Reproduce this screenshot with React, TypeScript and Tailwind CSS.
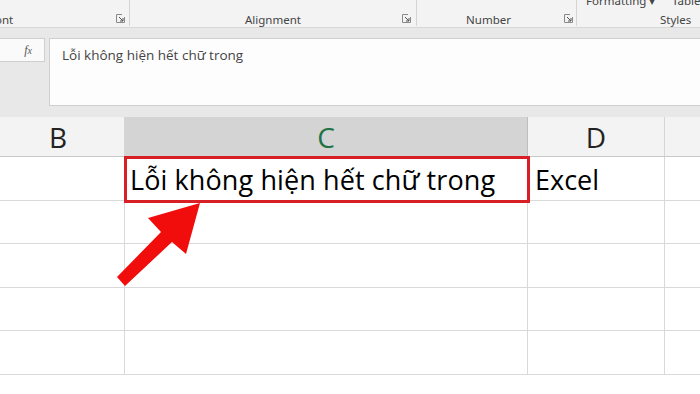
import React from "react";

const Launcher = () => (
  <svg width="9" height="9" viewBox="0 0 9 9" className="shrink-0">
    <path d="M0.5 0.5 H6 M0.5 0.5 V8.5 H8.5 V3" stroke="#8a8a8a" strokeWidth="1" fill="none" />
    <path d="M3 3 L7 7 M7 4 V7 H4" stroke="#555" strokeWidth="1" fill="none" />
  </svg>
);

const ui = { fontFamily: '"Noto Sans", "Open Sans", sans-serif' };
const cal = { fontFamily: '"Open Sans", "Noto Sans", sans-serif' };

export default function App() {
  const rows = [0, 1, 2, 3, 4];
  return (
    <div className="relative w-[700px] h-[394px] overflow-hidden bg-white" style={ui}>
      {/* Ribbon */}
      <div className="flex h-[28px] bg-[#f3f3f3] border-b border-[#d8d8d8] text-[11.5px] text-[#444]">
        <div className="w-[129px] flex items-end pb-0 relative">
          <span className="ml-[-11px] leading-[14px]">Font</span>
          <div className="absolute right-[4px] bottom-[4px]"><Launcher /></div>
        </div>
        <div className="w-px h-[26px] bg-[#d4d4d4]" />
        <div className="w-[286px] flex items-end justify-center pb-0 relative">
          <span className="leading-[14px]">Alignment</span>
          <div className="absolute right-[5px] bottom-[4px]"><Launcher /></div>
        </div>
        <div className="w-px h-[26px] bg-[#d4d4d4]" />
        <div className="w-[159px] flex items-end justify-center pb-0 relative">
          <span className="leading-[14px] mr-[16px]">Number</span>
          <div className="absolute right-[3px] bottom-[4px]"><Launcher /></div>
        </div>
        <div className="w-px h-[26px] bg-[#d4d4d4]" />
        <div className="flex-1 relative">
          <span className="absolute left-[9px] top-[-6px] leading-[14px] whitespace-nowrap">Formatting ▾</span>
          <span className="absolute left-[95px] top-[-6px] leading-[14px]">Table</span>
          <span className="absolute left-[83px] bottom-0 leading-[14px]">Styles</span>
        </div>
      </div>
      {/* Formula area */}
      <div className="h-[89px] bg-[#e8e8e8] flex pt-[10px] pb-[11px]">
        <div className="w-[45px] h-[24px] bg-[#fafafa] border border-[#cfcfcf] border-l-0 flex items-center justify-end pr-[12px]">
          <span className="italic text-[12px] text-[#555]" style={{ fontFamily: '"Liberation Serif", serif' }}>f<span className="text-[10px]">x</span></span>
        </div>
        <div className="ml-[4px] flex-1 bg-[#fdfdfd] border border-[#cfcfcf] border-r-0 pl-[12px] pt-[3px]">
          <span className="text-[13.5px] text-[#444]" style={{ fontFamily: '"Open Sans", sans-serif' }}>Lỗi không hiện hết chữ trong</span>
        </div>
      </div>
      {/* Column headers */}
      <div className="flex h-[40px] bg-[#f3f3f3] border-b border-[#c8c8c8] text-[28px] text-[#222]" style={cal}>
        <div className="w-[125px] border-r border-[#d6d6d6] flex items-center justify-center pr-[8px]">B</div>
        <div className="w-[403px] bg-[#d4d4d4] border-r border-[#bdbdbd] flex items-center justify-center text-[#217346]">C</div>
        <div className="w-[137px] border-r border-[#d6d6d6] flex items-center justify-center">D</div>
        <div className="flex-1" />
      </div>
      {/* Grid */}
      {rows.map((r) => (
        <div key={r} className="flex h-[43.5px] border-b border-[#d9d9d9] text-[27px] text-black" style={cal}>
          <div className="w-[125px] border-r border-[#d9d9d9]" />
          <div className="w-[403px] border-r border-[#d9d9d9] relative">
            {r === 0 && (
              <span className="absolute left-[5px] top-[3px] whitespace-nowrap tracking-[0.1px]">Lỗi không hiện hết chữ trong</span>
            )}
          </div>
          <div className="w-[137px] border-r border-[#d9d9d9] relative">
            {r === 0 && <span className="absolute left-[7px] top-[3px]">Excel</span>}
          </div>
          <div className="flex-1" />
        </div>
      ))}
      {/* Red selection box */}
      <div className="absolute left-[124px] top-[156px] w-[406px] h-[47px] border-[3px] border-[#d81f26]" />
      {/* Arrow */}
      <svg className="absolute left-0 top-0" width="700" height="394" viewBox="0 0 700 394">
        <polygon points="200,203 186,254 172,242 125,286 117,277 161,232 148,218" fill="#f20d0d" />
      </svg>
    </div>
  );
}
